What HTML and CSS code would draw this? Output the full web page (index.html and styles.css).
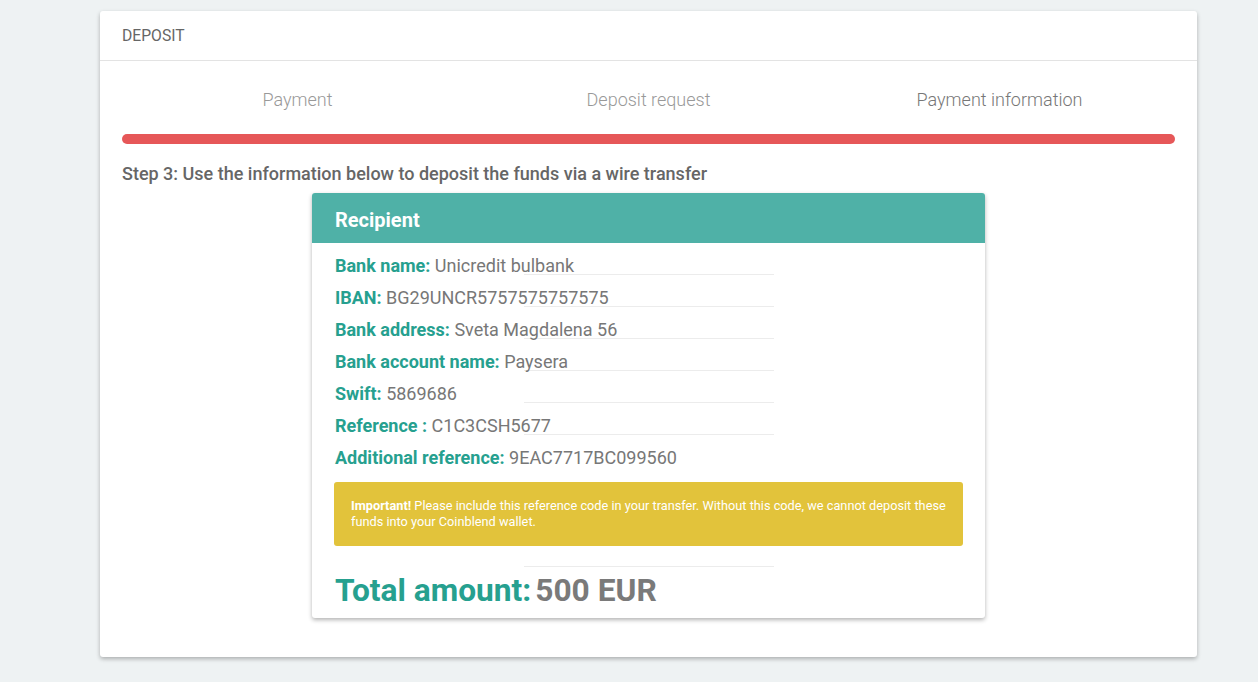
FILE: index.html
```html
<!DOCTYPE html>
<html>
<head>
<meta charset="utf-8">
<link rel="stylesheet" href="styles.css">
</head>
<body>
<div class="panel">
  <div class="panel-head">DEPOSIT</div>
  <div class="panel-body">
    <div class="steps">
      <div class="step">Payment</div>
      <div class="step">Deposit request</div>
      <div class="step active">Payment information</div>
    </div>
    <div class="progress"></div>
    <p class="instruction">Step 3: Use the information below to deposit the funds via a wire transfer</p>
    <div class="recipient">
      <div class="recipient-head">Recipient</div>
      <div class="recipient-body">
        <div class="row"><span class="label">Bank name:</span> Unicredit bulbank</div>
        <div class="rule"></div>
        <div class="row"><span class="label">IBAN:</span> BG29UNCR5757575757575</div>
        <div class="rule"></div>
        <div class="row"><span class="label">Bank address:</span> Sveta Magdalena 56</div>
        <div class="rule"></div>
        <div class="row"><span class="label">Bank account name:</span> Paysera</div>
        <div class="rule"></div>
        <div class="row"><span class="label">Swift:</span> 5869686</div>
        <div class="rule"></div>
        <div class="row"><span class="label">Reference :</span> C1C3CSH5677</div>
        <div class="rule"></div>
        <div class="row"><span class="label">Additional reference:</span> 9EAC7717BC099560</div>
        <div class="notice"><span class="notice-strong">Important!</span> Please include this reference code in your transfer. Without this code, we cannot deposit these funds into your Coinblend wallet.</div>
        <div class="rule total-rule"></div>
        <div class="total"><span class="total-label">Total amount:</span><span class="total-value">500 EUR</span></div>
      </div>
    </div>
  </div>
</div>
</body>
</html>
```

FILE: styles.css
```css
* { box-sizing: border-box; }
html, body { margin: 0; padding: 0; }
body {
  background: #eef2f3;
  font-family: Roboto, "Liberation Sans", sans-serif;
  color: #777;
  padding: 11px 61px 25px 100px;
}
.panel {
  background: #fff;
  border-radius: 3px;
  box-shadow: 0 2px 4px rgba(0,0,0,0.28);
}
.panel-head {
  height: 50px;
  line-height: 50px;
  padding: 0 22px;
  font-size: 15.7px;
  color: #666;
  border-bottom: 1px solid #e3e3e3;
}
.panel-body {
  padding: 28px 22px 39px;
}
.steps {
  display: grid;
  grid-template-columns: 1fr 1fr 1fr;
  text-align: center;
  font-size: 18px;
  font-weight: 300;
  line-height: 22px;
  color: #999;
}
.step.active { color: #777; }
.progress {
  margin-top: 23px;
  height: 10px;
  border-radius: 5px;
  background: #e65758;
}
.instruction {
  margin: 19px 0 10px;
  line-height: 20px;
  padding-top: 1px;
  height: 20px;
  font-size: 18px;
  font-weight: 500;
  color: #666;
}
.recipient {
  width: 673px;
  margin: 0 auto;
  background: #fff;
  border-radius: 3px;
  box-shadow: 0 2px 4px rgba(0,0,0,0.3);
}
.recipient-head {
  height: 50px;
  line-height: 54px;
  background: #4fb1a7;
  color: #fff;
  font-size: 20px;
  font-weight: 700;
  padding: 0 23px;
  border-radius: 3px 3px 0 0;
}
.recipient-body {
  padding: 11px 22px 10px;
}
.row {
  font-size: 18px;
  line-height: 24px;
  color: #777;
  padding-left: 1px;
}
.label {
  color: #26a08f;
  font-weight: 700;
}
.rule {
  width: 250px;
  height: 1px;
  background: #ececec;
  margin: -4px auto 11px;
}
.notice {
  margin-top: 12px;
  background: #e2c33b;
  border-radius: 3px;
  color: #fff;
  font-size: 12.75px;
  line-height: 16px;
  padding: 16px 16px 16px 17px;
}
.notice-strong { font-weight: 700; }
.total-rule {
  margin: 20px auto 5px;
}
.total {
  font-size: 31.7px;
  line-height: 36px;
  height: 36px;
  padding-top: 1px;
  font-weight: 700;
  padding-left: 1px;
}
.total-label { color: #26a08f; }
.total-value { color: #7a7a7a; margin-left: 4px; }
```
